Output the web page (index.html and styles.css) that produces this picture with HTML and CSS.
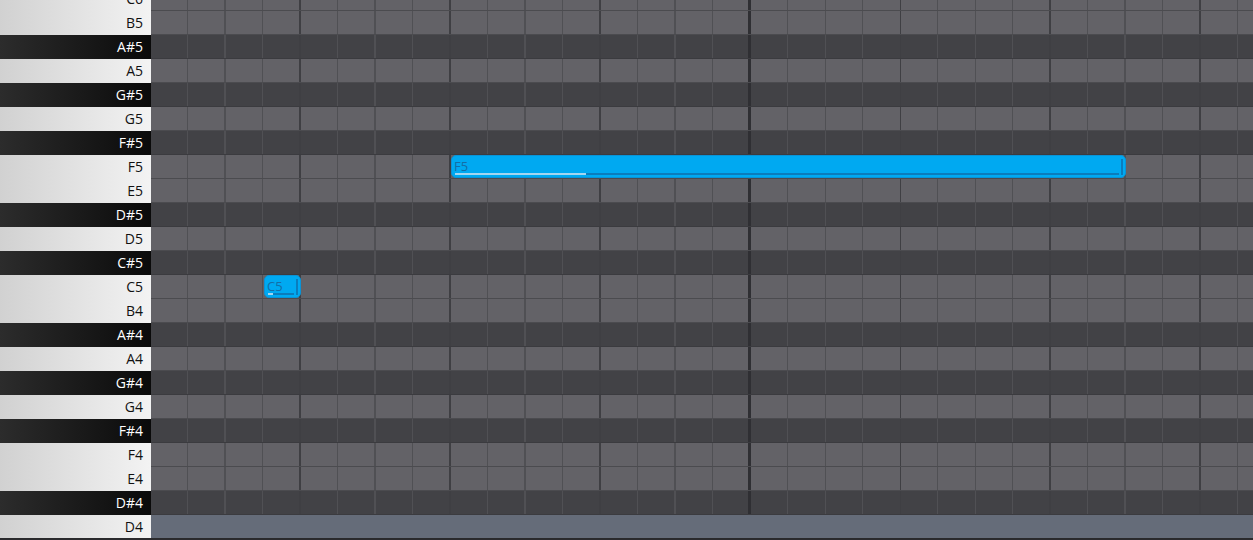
FILE: index.html
```html
<!DOCTYPE html>
<html lang="en">

<head>
    <meta charset="UTF-8">
    <title>Piano Roll</title>
    <link rel="stylesheet" href="styles.css">
</head>

<body>
    <div class="roll">
        <div class="row"><div class="key white">C6</div><div class="lane"></div></div>
        <div class="row"><div class="key white">B5</div><div class="lane"></div></div>
        <div class="row"><div class="key black">A#5</div><div class="lane dark"></div></div>
        <div class="row"><div class="key white">A5</div><div class="lane"></div></div>
        <div class="row"><div class="key black">G#5</div><div class="lane dark"></div></div>
        <div class="row"><div class="key white">G5</div><div class="lane"></div></div>
        <div class="row"><div class="key black">F#5</div><div class="lane dark"></div></div>
        <div class="row"><div class="key white">F5</div><div class="lane"></div></div>
        <div class="row"><div class="key white">E5</div><div class="lane"></div></div>
        <div class="row"><div class="key black">D#5</div><div class="lane dark"></div></div>
        <div class="row"><div class="key white">D5</div><div class="lane"></div></div>
        <div class="row"><div class="key black">C#5</div><div class="lane dark"></div></div>
        <div class="row"><div class="key white">C5</div><div class="lane"></div></div>
        <div class="row"><div class="key white">B4</div><div class="lane"></div></div>
        <div class="row"><div class="key black">A#4</div><div class="lane dark"></div></div>
        <div class="row"><div class="key white">A4</div><div class="lane"></div></div>
        <div class="row"><div class="key black">G#4</div><div class="lane dark"></div></div>
        <div class="row"><div class="key white">G4</div><div class="lane"></div></div>
        <div class="row"><div class="key black">F#4</div><div class="lane dark"></div></div>
        <div class="row"><div class="key white">F4</div><div class="lane"></div></div>
        <div class="row"><div class="key white">E4</div><div class="lane"></div></div>
        <div class="row"><div class="key black">D#4</div><div class="lane dark"></div></div>
        <div class="row last"><div class="key white">D4</div><div class="lane off"></div></div>

        <!-- notes sit on the lane canvas -->
        <div class="notes">
            <div class="note" style="left: 300px; top: 168px; width: 675px;">
                <span class="label">F5</span>
                <div class="vel"><div class="vel-fill" style="width: 131px;"></div></div>
                <div class="handle"></div>
            </div>
            <div class="note" style="left: 113px; top: 288px; width: 37px;">
                <span class="label">C5</span>
                <div class="vel"><div class="vel-fill" style="width: 5px;"></div></div>
                <div class="handle"></div>
            </div>
        </div>
    </div>
</body>

</html>
```

FILE: styles.css
```css
* {
    box-sizing: border-box;
}

html,
body {
    margin: 0;
    height: 100%;
    overflow: hidden;
    background-color: #2b2b2e;
}

body {
    font-family: "Open Sans", "Noto Sans", Arial, sans-serif;
}

.roll {
    position: relative;
    margin-top: -13px;
}

.row {
    display: flex;
    height: 24px;
}

.row.last {
    height: 24px;
    border-bottom: 1px solid #2a2a2c;
}

.key {
    width: 151px;
    flex-shrink: 0;
    text-align: right;
    padding-right: 8px;
    font-size: 14px;
    line-height: 24px;
}

.key.white {
    color: #111;
    background: linear-gradient(90deg, #d1d1d1, #f3f3f3);
}

.key.black {
    color: #fff;
    background: linear-gradient(90deg, #2c2c2c, #0a0a0a);
}

.lane {
    flex: 1;
    background-color: #636267;
    border-bottom: 1px solid #4b4b4f;
    background-image:
        repeating-linear-gradient(90deg, transparent 0 597px, #2f2f33 597px 600px),
        repeating-linear-gradient(90deg, transparent 0 148.5px, #3f3f43 148.5px 150px),
        repeating-linear-gradient(90deg, transparent 0 36px, #505054 36px 37.5px);
}

.lane.dark {
    background-color: #424246;
    border-bottom-color: #3b3b3f;
}

.lane.off {
    background-color: #656c79;
    background-image: none;
    border-bottom: none;
}

.notes {
    position: absolute;
    top: 0;
    left: 151px;
    right: 0;
    bottom: 0;
}

.note {
    position: absolute;
    height: 23px;
    background-color: #00a9f1;
    border: 1px solid #0a93d6;
    border-radius: 5px;
}

.note .label {
    position: absolute;
    left: 2px;
    top: 2px;
    font-size: 13px;
    line-height: 16px;
    color: #146ea6;
}

.vel {
    position: absolute;
    left: 3px;
    right: 6px;
    top: 17px;
    height: 2px;
    background-color: #0a7dbd;
}

.vel-fill {
    height: 2px;
    background-color: #a3d6f1;
}

.handle {
    position: absolute;
    right: 2px;
    top: 3px;
    width: 2px;
    height: 16px;
    background-color: #0a7dbd;
}
```
